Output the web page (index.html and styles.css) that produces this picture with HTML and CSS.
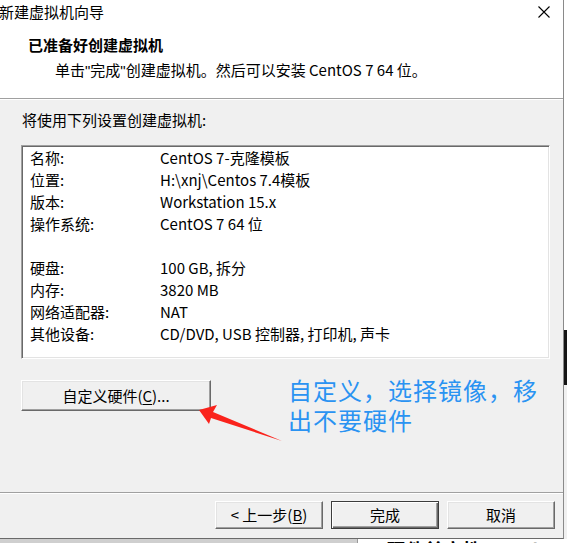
FILE: index.html
```html
<!DOCTYPE html>
<html lang="zh-CN">
<head>
<meta charset="utf-8">
<title>新建虚拟机向导</title>
<link rel="stylesheet" href="styles.css">
</head>
<body>
<div class="page">
  <div class="main">
    <div class="dialog">
      <div class="titlebar">
        <span class="title">新建虚拟机向导</span>
        <svg class="close" width="12" height="12" viewBox="0 0 12 12"><path d="M0.5 0.5 L11.5 11.5 M11.5 0.5 L0.5 11.5" stroke="#000" stroke-width="1.1" fill="none"/></svg>
      </div>
      <div class="header">
        <div class="heading">已准备好创建虚拟机</div>
        <div class="subheading">单击<span class="q">"</span>完成<span class="q">"</span>创建虚拟机。然后可以安装 CentOS 7 64 位。</div>
      </div>
      <div class="content">
        <div class="intro">将使用下列设置创建虚拟机:</div>
        <div class="summary">
          <div class="row"><span class="label">名称:</span><span class="value">CentOS 7-克隆模板</span></div>
          <div class="row"><span class="label">位置:</span><span class="value">H:\xnj\Centos 7.4模板</span></div>
          <div class="row"><span class="label">版本:</span><span class="value">Workstation 15.x</span></div>
          <div class="row"><span class="label">操作系统:</span><span class="value">CentOS 7 64 位</span></div>
          <div class="row"></div>
          <div class="row"><span class="label">硬盘:</span><span class="value">100 GB, 拆分</span></div>
          <div class="row"><span class="label">内存:</span><span class="value">3820 MB</span></div>
          <div class="row"><span class="label">网络适配器:</span><span class="value">NAT</span></div>
          <div class="row"><span class="label">其他设备:</span><span class="value">CD/DVD, USB 控制器, 打印机, 声卡</span></div>
        </div>
        <div class="custom-row">
          <button class="btn btn-custom">自定义硬件(<u>C</u>)...</button>
          <div class="note">自定义，选择镜像，移<br>出不要硬件</div>
        </div>
        <svg class="arrow" width="92" height="46" viewBox="0 0 92 46"><polygon points="4,10 22,5 18,12 87,41 16,18 14,24" fill="#fa231c"/></svg>
      </div>
      <div class="footer">
        <button class="btn">&lt; 上一步(<u>B</u>)</button>
        <button class="btn btn-default">完成</button>
        <button class="btn">取消</button>
      </div>
    </div>
    <div class="edge"></div>
  </div>
  <div class="under">
    <div class="under-left"></div>
    <div class="under-right"><span class="under-text">硬件兼容性: Workstation</span></div>
  </div>
</div>
</body>
</html>
```
FILE: styles.css
```css
html, body {
  margin: 0;
  padding: 0;
}
body {
  width: 567px;
  height: 543px;
  overflow: hidden;
  background: #f0f0f0;
  font-family: "Noto Sans CJK SC", "Noto Sans", "Liberation Sans", sans-serif;
  font-size: 15px;
  color: #000;
}
.page {
  width: 567px;
  height: 543px;
  display: flex;
  flex-direction: column;
}
.main {
  display: flex;
  height: 539px;
}
.dialog {
  width: 563px;
  height: 538px;
  border-right: 1px solid #8a8a8a;
  border-bottom: 1px solid #6a6a6a;
  background: #f0f0f0;
  display: flex;
  flex-direction: column;
}
.edge {
  width: 3px;
  height: 539px;
  background: linear-gradient(#ffffff 0, #ffffff 330px, #151515 330px, #151515 385px, #f0f0f0 385px);
}
.titlebar {
  height: 24px;
  background: #fff;
  display: flex;
  align-items: center;
  justify-content: space-between;
  padding-right: 13px;
}
.title {
  line-height: 24px;
  margin-left: -1px;
}
.close {
  display: block;
  margin-top: -1px;
}
.header {
  height: 75px;
  background: #fff;
  border-bottom: 1px solid #a0a0a0;
  box-sizing: border-box;
  padding-top: 10px;
  padding-left: 28px;
}
.heading {
  font-weight: bold;
  line-height: 22px;
  height: 22px;
}
.subheading {
  line-height: 22px;
  margin-top: 3px;
  padding-left: 27px;
}
.q {
  font-family: "Liberation Sans", "Noto Sans", sans-serif;
}
.content {
  flex: 1;
  padding: 9px 0 0 21px;
  border-bottom: 1px solid #a0a0a0;
  box-shadow: 0 1px 0 #ffffff;
  border-top: 1px solid #ffffff;
  position: relative;
}
.intro {
  line-height: 22px;
  padding-left: 1px;
}
.summary {
  margin-top: 14px;
  width: 529px;
  height: 214px;
  box-sizing: border-box;
  background: #fff;
  border: 1px solid;
  border-color: #a0a0a0 #ffffff #ffffff #a0a0a0;
  box-shadow: inset 1px 1px 0 #696969, inset -1px -1px 0 #e3e3e3;
  padding: 1px 0 0 8px;
}
.row {
  height: 22px;
  line-height: 22px;
  display: flex;
  white-space: nowrap;
}
.label {
  width: 130px;
  flex: none;
}
.custom-row {
  display: flex;
  align-items: flex-start;
  margin-top: 21px;
}
.btn {
  font-family: inherit;
  font-size: 15px;
  color: #000;
  background: #f0f0f0;
  border: 1px solid;
  border-color: #ffffff #696969 #696969 #ffffff;
  box-shadow: inset -1px -1px 0 #a0a0a0, inset 1px 1px 0 #e3e3e3;
  padding: 0;
  margin: 0;
  box-sizing: border-box;
  line-height: 20px;
}
.btn u {
  text-decoration-thickness: 1px;
  text-underline-offset: 2px;
}
.btn-custom {
  width: 190px;
  height: 31px;
}
.note {
  margin-left: 77px;
  margin-top: -5px;
  font-size: 24px;
  line-height: 30px;
  letter-spacing: 1px;
  color: #2a93f2;
  white-space: nowrap;
}
.arrow {
  position: absolute;
  left: 195px;
  top: 300px;
}
.footer {
  height: 45px;
  box-sizing: border-box;
  padding: 8px 8px 0 0;
  display: flex;
  justify-content: flex-end;
  gap: 8px;
}
.footer .btn {
  width: 108px;
  height: 28px;
}
.btn-default {
  border: 1px solid #3c3c3c;
  box-shadow: inset 1px 1px 0 #ffffff, inset -1px -1px 0 #696969, inset -2px -2px 0 #a0a0a0;
}
.under {
  display: flex;
  height: 4px;
  overflow: hidden;
}
.under-left {
  width: 357px;
  background: #cfcfcf;
  border-right: 1px solid #9a9a9a;
}
.under-right {
  flex: 1;
  background: #ffffff;
  overflow: hidden;
  position: relative;
}
.under-text {
  display: block;
  padding-left: 29px;
  font-size: 18px;
  font-weight: bold;
  line-height: 18px;
  margin-top: 1px;
  white-space: nowrap;
  letter-spacing: 1px;
}
```
